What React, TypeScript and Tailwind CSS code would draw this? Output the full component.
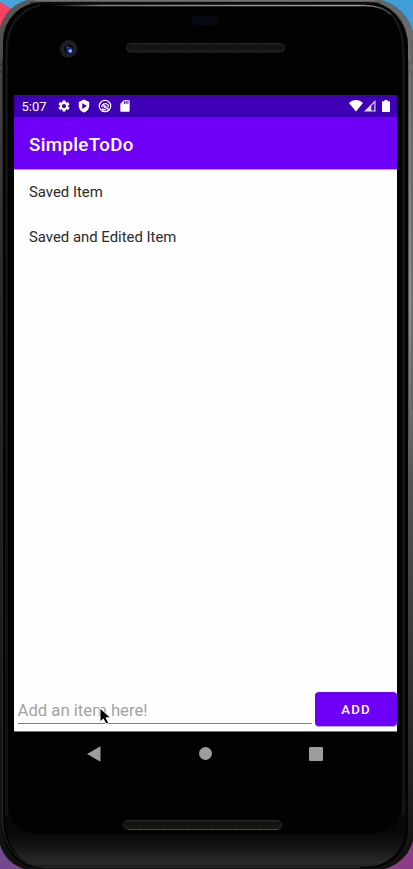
import React from "react";
import { MdSettings, MdSdCard } from "react-icons/md";

function PhoneBody() {
  return (
    <svg className="absolute inset-0" width="413" height="869" viewBox="0 0 413 869" aria-hidden="true">
      <defs>
        <linearGradient id="rim" x1="0" y1="0" x2="0" y2="1">
          <stop offset="0" stopColor="#5c5c5c" />
          <stop offset="0.07" stopColor="#484848" />
          <stop offset="0.3" stopColor="#2b2b2b" />
          <stop offset="1" stopColor="#101010" />
        </linearGradient>
        <linearGradient id="rimRight" x1="0" y1="0" x2="0" y2="1">
          <stop offset="0" stopColor="#666" />
          <stop offset="0.35" stopColor="#929292" />
          <stop offset="0.55" stopColor="#555" />
          <stop offset="0.8" stopColor="#303030" />
          <stop offset="1" stopColor="#101010" />
        </linearGradient>
        <linearGradient id="chin" gradientUnits="userSpaceOnUse" x1="0" y1="833" x2="0" y2="868">
          <stop offset="0" stopColor="#080808" />
          <stop offset="0.45" stopColor="#161616" />
          <stop offset="0.85" stopColor="#2a2a2a" />
          <stop offset="1" stopColor="#181818" />
        </linearGradient>
        <linearGradient id="shine" gradientUnits="userSpaceOnUse" x1="50" y1="0" x2="391" y2="0">
          <stop offset="0" stopColor="#7d8589" stopOpacity="0" />
          <stop offset="0.15" stopColor="#7d8589" />
          <stop offset="0.9" stopColor="#a0a5a8" />
          <stop offset="1" stopColor="#a0a5a8" stopOpacity="0.3" />
        </linearGradient>
        <pattern id="mesh" width="3" height="8" patternUnits="userSpaceOnUse">
          <rect width="3" height="8" fill="#12120f" />
          <rect width="1" height="5" y="1" fill="#211f1c" />
        </pattern>
        <clipPath id="outline">
          <path d="M36 -1H371A43 43 0 0 1 414 42V831A39 39 0 0 1 375 870H33A34 34 0 0 1 -1 836V36A37 37 0 0 1 36 -1Z" />
        </clipPath>
      </defs>
      <rect width="413" height="869" fill="#000" />
      <path d="M0 0H32L12 20L0 2Z" fill="#4ba3d8" />
      <path d="M0 2L17 12L0 34Z" fill="#f8425f" />
      <path d="M365 0H413V50Z" fill="#3f9ed8" />
      <path d="M0 830L36 869H0Z" fill="#73488f" />
      <path d="M413 825V869H370Z" fill="#8d3c87" />
      <g clipPath="url(#outline)">
        <rect x="-1" y="-1" width="415" height="871" fill="url(#rim)" />
        <path d="M370 -1H414V869H375V860C399 854 408 844 408 822V46C408 20 395 5 370 2Z" fill="url(#rimRight)" />
        <path d="M408.5 60V440" stroke="#555" />
        <path d="M412 40V410" stroke="#5e5e5e" strokeWidth="2" opacity="0.6" />
        <path d="M0 65H3M0 72H3" stroke="#222" />
        <rect x="408.5" y="63" width="5" height="9" fill="#6d6d6d" stroke="#555" strokeWidth="0.6" />
        <path d="M42 2H368A40 44 0 0 1 408 46V829A38 39 0 0 1 370 868H39A36 39 0 0 1 3 829V41A39 39 0 0 1 42 2Z" fill="#020202" />
        <path d="M6 790V822C6 848 20 867 48 867H364C390 867 407 849 407 820V790L402 800C400 825 393 834 366 834H40C18 834 9 823 8 800Z" fill="url(#chin)" />
        <path d="M6.5 815V52Q7 13 40 5M403.5 815V55Q403 22 388 12" fill="none" stroke="#161616" strokeWidth="2.5" />
        <path d="M2.5 60V818C3 848 18 866 45 867.5H360" fill="none" stroke="#2a2a2a" />
      </g>
      <path d="M50 5.5H365Q383 6 391 14.5" fill="none" stroke="url(#shine)" strokeWidth="1.7" />
      <path d="M35 .5H375" stroke="#737373" />
      <path d="M30 3H380" stroke="#171717" />
      <circle cx="68.7" cy="49" r="9" fill="#1c1c1c" />
      <circle cx="68.7" cy="49" r="6.5" fill="#262525" />
      <circle cx="68.7" cy="49" r="4.8" fill="#05091e" />
      <circle cx="69.5" cy="50" r="3.1" fill="#1b2b83" />
      <circle cx="67.4" cy="47.3" r="1" fill="#3750c9" />
      <circle cx="70.3" cy="51" r="1.7" fill="#98b1fb" />
      <rect x="191" y="16" width="27" height="9" rx="4.5" fill="#070b11" />
      <rect x="126.5" y="43.5" width="158" height="8.5" rx="4.2" fill="url(#mesh)" stroke="#292929" />
      <rect x="123.5" y="820.5" width="158" height="9" rx="4.5" fill="url(#mesh)" stroke="#292929" />
      <path d="M128 829.5H277" stroke="#494949" />
    </svg>
  );
}

function StatusBar() {
  return (
    <div className="flex h-[22px] shrink-0 items-center bg-[#3f00b5] pl-[7.5px] pr-[7px] text-white">
      <span className="w-[35px] pt-px text-[13px] leading-[22px]">5:07</span>
      <MdSettings className="size-[14px]" />
      <svg className="ml-[6.5px]" width="14" height="14" viewBox="0 0 24 24">
        <path fill="currentColor" fillRule="evenodd" d="M12 1L3 5v6c0 5.55 3.84 10.74 9 12 5.16-1.26 9-6.45 9-12V5zM9 7l8 5-8 5z" />
      </svg>
      <svg className="ml-[6.5px]" width="14" height="14" viewBox="0 0 24 24" fill="none" stroke="currentColor">
        <circle cx="12" cy="12" r="9.8" strokeWidth="2.1" />
        <path d="M6.5 14A6 6 0 0 1 17.5 10.5V14" strokeWidth="2.1" />
        <path d="M9 9.5L18.5 18.5M7 16.5c2 2.1 4.6 2.2 6.5 1" strokeWidth="2.5" />
        <path d="M10 12.5a2.4 2.4 0 0 0 3 2.4" strokeWidth="1.8" />
      </svg>
      <MdSdCard className="ml-[6.5px] size-[14px]" />
      <div className="grow" />
      <svg width="14" height="12" viewBox="0 0 14 12">
        <path d="M0 3C4-.9 10-.9 14 3L7 11.5Z" fill="currentColor" />
      </svg>
      <svg className="ml-[1px]" width="12" height="12" viewBox="0 0 12 12">
        <path d="M0 11.5L11.5 0V11.5Z" fill="currentColor" opacity=".85" />
        <path d="M7.2 6L10.4 2.8V10.5H7.2Z" fill="#4a10b8" />
      </svg>
      <svg className="ml-[6px]" width="8" height="12" viewBox="0 0 8 12">
        <path d="M2.4 0H5.6V1.2H7.2Q8 1.2 8 2V11.2Q8 12 7.2 12H.8Q0 12 0 11.2V2Q0 1.2 .8 1.2H2.4Z" fill="currentColor" />
      </svg>
    </div>
  );
}

export default function App() {
  return (
    <main className="relative h-[869px] w-[413px] overflow-hidden bg-black font-['Roboto',sans-serif]">
      <PhoneBody />
      <div className="relative ml-[14px] flex h-[869px] w-[383px] flex-col pt-[95px]">
        <StatusBar />
        <header className="flex h-[52px] shrink-0 items-center bg-[#6e00f8] pl-[15px] pt-[4px] text-[18.7px] font-medium tracking-[0.35px] text-white">
          SimpleToDo
        </header>
        <section className="flex h-[563px] shrink-0 flex-col border-t border-[#b8b2bd] bg-[#fefefe]">
          <ul className="text-[14.9px] leading-[45px] text-[#2b2b2b]">
            <li className="h-[45px] pl-[15px]">Saved Item</li>
            <li className="h-[45px] pl-[15px]">Saved and Edited Item</li>
          </ul>
          <div className="mt-auto flex h-[40px] items-start border-b border-[#777]">
            <div className="relative ml-1 flex h-[32px] w-[294px] items-center border-b border-[#808080] pt-[7px] text-[16.7px] text-[#a3a3a3]">
              <span className="-ml-[0.5px]">Add an item here!</span>
              <svg className="absolute left-[81px] top-[15px]" width="13" height="19" viewBox="0 0 13 19">
                <path d="M1 1V15L4.3 12L7 17.2L9.7 15.8L7 10.8H11.7Z" fill="#000" stroke="#fff" />
              </svg>
            </div>
            <button className="ml-[3px] h-[34px] w-[82px] rounded-[4px] bg-[#6e00f8] pt-px text-[13.2px] font-medium tracking-[1.2px] text-white shadow-[0_1px_1px_#aaa]">
              ADD
            </button>
          </div>
        </section>
        <nav className="flex h-[43px] items-center pl-[73px] text-[#9d9d9d]">
          <svg width="14" height="16" viewBox="0 0 14 16"><path d="M0 8L13.5 .3V15.7Z" fill="currentColor" /></svg>
          <div className="ml-[98px] size-[13px] rounded-full bg-[#9d9d9d]" />
          <div className="ml-[97px] size-[14px] rounded-[1px] bg-[#9d9d9d]" />
        </nav>
      </div>
    </main>
  );
}
